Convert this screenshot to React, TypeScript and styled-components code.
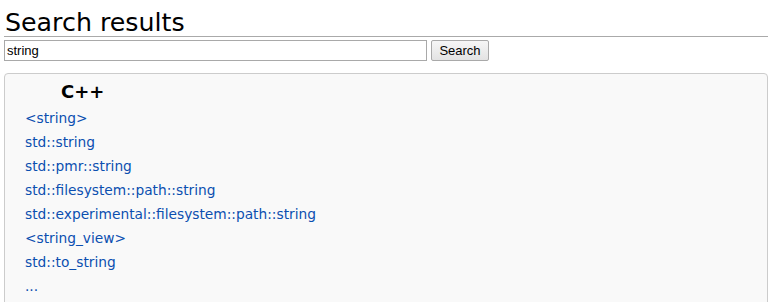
import React from "react";
import styled, { createGlobalStyle } from "styled-components";

const Global = createGlobalStyle`
  html, body { margin: 0; padding: 0; background: #fff; }
  body { font-family: "DejaVu Sans", sans-serif; }
`;

const Page = styled.div`
  padding: 0 4px;
`;

const Title = styled.h1`
  margin: 0;
  padding: 8px 0 0 1px;
  height: 37px;
  box-sizing: border-box;
  font-family: "DejaVu Sans", sans-serif;
  font-weight: normal;
  font-size: 25.3px;
  line-height: 30px;
  color: #000;
  border-bottom: 1px solid #aaa;
`;

const SearchForm = styled.form`
  display: flex;
  align-items: flex-start;
  gap: 4px;
  margin-top: 3px;
`;

const SearchInput = styled.input`
  box-sizing: border-box;
  width: 423px;
  height: 21px;
  margin: 0;
  padding: 0 2px;
  border: 1px solid #a9a9a9;
  font-family: "Liberation Sans", Arial, sans-serif;
  font-size: 13px;
  color: #000;
  outline: none;
`;

const SearchButton = styled.button`
  box-sizing: border-box;
  width: 58px;
  height: 21px;
  margin: 0;
  padding: 0;
  border: 1px solid #a9a9a9;
  border-radius: 2px;
  background: linear-gradient(#f6f6f6, #e3e3e3);
  font-family: "Liberation Sans", Arial, sans-serif;
  font-size: 13px;
  color: #000;
`;

const ResultBox = styled.div`
  margin-top: 12px;
  border: 1px solid #ccc;
  border-radius: 4px;
  background: #f9f9f9;
  padding: 7px 0 0 20px;
  height: 240px;
`;

const LangTitle = styled.div`
  font-family: "DejaVu Sans", sans-serif;
  font-weight: bold;
  font-size: 18px;
  line-height: 22px;
  padding-left: 36px;
  margin-bottom: 3px;
  color: #000;
`;

const ResultList = styled.ul`
  list-style: none;
  margin: 0;
  padding: 0;
`;

const ResultItem = styled.li`
  line-height: 24px;
  font-size: 13.75px;
`;

const ResultLink = styled.a`
  color: #0b4fb0;
  text-decoration: none;
  font-family: "DejaVu Sans", sans-serif;
`;

const results = [
  "<string>",
  "std::string",
  "std::pmr::string",
  "std::filesystem::path::string",
  "std::experimental::filesystem::path::string",
  "<string_view>",
  "std::to_string",
  "...",
];

export default function App() {
  return (
    <Page>
      <Global />
      <Title>Search results</Title>
      <SearchForm onSubmit={(e) => e.preventDefault()}>
        <SearchInput defaultValue="string" />
        <SearchButton type="submit">Search</SearchButton>
      </SearchForm>
      <ResultBox>
        <LangTitle>C++</LangTitle>
        <ResultList>
          {results.map((r) => (
            <ResultItem key={r}>
              <ResultLink href="#">{r}</ResultLink>
            </ResultItem>
          ))}
        </ResultList>
      </ResultBox>
    </Page>
  );
}
